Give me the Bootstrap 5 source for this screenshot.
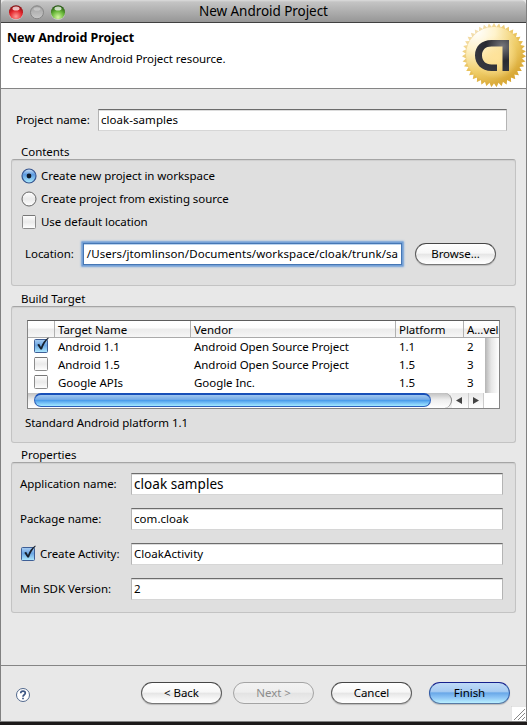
<!DOCTYPE html>
<html lang="en">
<head>
<meta charset="utf-8">
<meta name="viewport" content="width=device-width, initial-scale=1">
<title>New Android Project</title>
<link href="https://cdn.jsdelivr.net/npm/bootstrap@5.3.0/dist/css/bootstrap.min.css" rel="stylesheet">
<style>
body{width:527px;height:725px;overflow:hidden;background:#1d1a1a;font:12px/16px "Noto Sans","Open Sans",sans-serif;font-size:11.5px;color:#000;letter-spacing:-.05px}
.window{width:527px;height:722px;background:#e8e8e8;border:solid #808080;border-width:0 1px 1px 1px}
.titlebar{height:23px;background:linear-gradient(#dcdcdc 0,#c4c4c4 2px,#969696 22px);border-bottom:1px solid #404040;border-radius:5px 5px 0 0;padding-left:8px;font-size:13.5px}
.titlebar svg{width:56px;height:18px;margin-top:2px}
.titletext{margin-left:134px;white-space:nowrap;line-height:22px}
.banner{height:66px;background:#fff;border-bottom:1px solid #858585;padding:6px 0 0 6px}
.headline{font-size:12.5px;font-weight:700;line-height:17px}
.subline{padding:5px 0 0 5px}
.seal{width:64px;height:64px;margin-top:-6px}
.projectrow{height:22px;margin:20px 19px 0 15px}
.projectlabel{width:82px}
.field{height:22px;border:1px solid #b4b4b4;border-top-color:#6c6c6c;border-bottom-color:#d6d6d6;border-radius:0;background:#fff;padding:1px 2px;font-size:inherit;line-height:17px;color:#000;box-shadow:inset 0 1px 0 #dcdcdc;white-space:nowrap;overflow:hidden;letter-spacing:.05px}
.field.large{font-size:13.5px;line-height:19px}
.grouptitle{height:16px;padding-left:20px}
.contentstitle{margin-top:13px}
.targettitle{margin-top:5px}
.proptitle{margin-top:4px}
.groupbox{margin:-1px 10px 0 10px;background:#dfdfdf;border:1px solid #c3c3c3;border-top-color:#a5a5a5;border-radius:3px;box-shadow:inset 0 1px 1px #cfcfcf}
.contentsbox{height:127px;padding-top:4px}
.choice{height:23px;padding-left:9px;gap:4px}
.choice svg,.gridrow svg,.proprow svg{flex:none;overflow:visible}
.location{height:26px;margin:8px 19px 0 13px}
.focusfield{width:319px;height:22px;margin-left:9px;border:1px solid #4677b4;box-shadow:0 0 0 1.5px #74a0d6,0 0 2px 2px #8cb2de,inset 0 1px #bcd4ee;padding-left:3px;letter-spacing:.08px}
.aqua{width:81px;height:22px;padding:0 0 1px;font-size:inherit;line-height:17px;letter-spacing:inherit;color:#000!important;border:1.5px solid #555;border-color:#464646 #5c5c5c #777;border-radius:11px;background:linear-gradient(#fff 0,#f7f7f7 45%,#e6e6e6 52%,#f8f8f8 80%,#fff);box-shadow:0 1px 1px #bbb}
.aqua:disabled{color:#8c8c8c!important;border-color:#a4a4a4;background:linear-gradient(#f2f2f2 0,#eee 45%,#e3e3e3 52%,#f0f0f0);opacity:1;box-shadow:none}
.aqua.primary{border-color:#16208c #315ba5 #587aa4;background:linear-gradient(#bfdaf6 0,#a6cbf2 42%,#69a8e8 50%,#8cc4f5 72%,#baf0ff)}
.targetbox{height:137px}
.targets{width:473px;height:89px;margin:13px 0 0 15px;border:1px solid #858585;border-top:1px solid #5c5c5c;background:#fff}
.gridhead,.gridrow{display:grid;grid-template-columns:27px 136px 205px 68px 1fr}
.gridhead{height:17px;border-bottom:1px solid #aaa;background:linear-gradient(#fff 0,#fcfcfc 44%,#ebebeb 50%,#f6f6f6);line-height:17px}
.gridhead>div{border-right:1px solid #b1b1b1;padding-left:3px;white-space:nowrap;overflow:hidden}
.gridhead>div:last-child{border:0}
.gridrow{height:18px;line-height:17px;width:457px}
.gridrow>div{padding-left:3px;white-space:nowrap}
.gridrow>div:first-child{padding-left:6px;line-height:0}
.vtrack{width:14px;height:55px;background:linear-gradient(90deg,#b4b4b4,#e7e7e7 45%,#fff)}
.hscroll{width:456px;height:15px;background:#f0f0f0}
.htrack{width:424px;height:15px;background:linear-gradient(#c0c0c0,#eee 45%,#fff);border-radius:0 8px 8px 0;border-right:1px solid #888;padding-left:6px}
.thumb{width:397px;height:14px;border-radius:7px;border:1px solid #2b5fba;border-top:2px solid #174fb8;background:linear-gradient(#9fc6ee 0,#76ace7 40%,#479ae9 48%,#7cc5f8 75%,#a0eaff)}
.arrows{width:32px;height:15px;background:linear-gradient(#e8e8e8,#fff)}
.targetnote{padding:6px 0 0 13px}
.propbox{height:151px;padding-top:10px}
.proprow{height:22px;margin-bottom:13px;padding:0 12px 0 8px}
.proplabel{width:111px;gap:4px;white-space:nowrap}
.footerbar{height:55px;border-top:1px solid #858585;margin-top:52px;padding-left:14px}
.footerbar .aqua{position:static;margin-bottom:1px}
.help{margin-top:3px;margin-right:110px}
.gapnext{margin-left:11px}
.gapwide{margin-left:17px}
.grip{right:0;bottom:0;width:15px;height:15px;background:#fff}
</style>
</head>
<body>
<svg width="0" height="0" class="position-absolute">
<defs>
<linearGradient id="bluebox" x2="0" y2="1"><stop stop-color="#a9cdf2"/><stop offset=".45" stop-color="#6ba6e3"/><stop offset="1" stop-color="#b0ebff"/></linearGradient>
<linearGradient id="plainbox" x2="0" y2="1"><stop stop-color="#fff"/><stop offset=".5" stop-color="#eaeaea"/><stop offset="1" stop-color="#fff"/></linearGradient>
<linearGradient id="blueball" x2="0" y2="1"><stop stop-color="#cfe3f8"/><stop offset=".4" stop-color="#5c9ae0"/><stop offset="1" stop-color="#b0f0ff"/></linearGradient>
<symbol id="checked" viewBox="0 0 16 16" overflow="visible"><rect x=".5" y="1.5" width="13" height="13" rx="1" fill="url(#bluebox)" stroke="#3f5f96"/><path d="M3.300 6.700 5.100 5.800 7 8.900C8.600 5 10.600 2 14.200-.4L14.700.3C11.400 3.700 9.500 7 8 11.600H6.400Z" fill="#16202e"/></symbol>
<symbol id="unchecked" viewBox="0 0 16 16"><rect x=".5" y="1.5" width="13" height="13" rx="1" fill="url(#plainbox)" stroke="#8d8d8d"/><path d="M1 1.500h12" stroke="#777"/></symbol>
</defs>
</svg>
<main class="window d-flex flex-column position-relative">
<header class="titlebar d-flex align-items-center flex-shrink-0">
<svg viewBox="0 0 56 18" overflow="visible"><defs>
<radialGradient id="redball" cy=".8" r=".8"><stop stop-color="#ff9d98"/><stop offset=".55" stop-color="#e3262c"/><stop offset="1" stop-color="#7b0d10"/></radialGradient>
<radialGradient id="greenball" cy=".85" r=".8"><stop stop-color="#d5f7a0"/><stop offset=".55" stop-color="#68b639"/><stop offset="1" stop-color="#245611"/></radialGradient>
<linearGradient id="greyball" x2="0" y2="1"><stop stop-color="#a0a0a0"/><stop offset="1" stop-color="#c9c9c9"/></linearGradient></defs>
<circle cx="7" cy="10" r="7.100" fill="#ccc"/><circle cx="7" cy="9.300" r="7" fill="url(#redball)"/><ellipse cx="7" cy="5.500" rx="3.500" ry="2.100" fill="#fff" opacity=".72"/>
<circle cx="28" cy="9.300" r="6.500" fill="url(#greyball)" stroke="#858585"/><ellipse cx="28" cy="6" rx="3.500" ry="1.800" fill="#ddd" opacity=".5"/>
<circle cx="49" cy="10" r="7.100" fill="#ccc"/><circle cx="49" cy="9.300" r="7" fill="url(#greenball)"/><ellipse cx="49" cy="5.500" rx="3.500" ry="2.100" fill="#fff" opacity=".72"/></svg>
<span class="titletext">New Android Project</span>
</header>
<section class="banner d-flex justify-content-between flex-shrink-0">
<div><div class="headline">New Android Project</div><div class="subline">Creates a new Android Project resource.</div></div>
<svg class="seal" viewBox="0 0 64 64"><defs><radialGradient id="gold" cx=".22" cy=".12" r="1"><stop stop-color="#fff"/><stop offset=".3" stop-color="#fff3cc"/><stop offset=".65" stop-color="#efcd68"/><stop offset="1" stop-color="#d09a22"/></radialGradient><radialGradient id="glow"><stop stop-color="#ffe39a"/><stop offset="1" stop-color="#ffe7a8" stop-opacity="0"/></radialGradient><radialGradient id="ink" cx=".8" cy=".2" r=".8"><stop stop-color="#77777c"/><stop offset=".6" stop-color="#292a31"/><stop offset="1" stop-color="#34363e"/></radialGradient>
<path id="spike" d="M32 0 59.700 48H4.300Z"/>
<clipPath id="teeth"><use href="#spike"/><use href="#spike" transform="rotate(9.231 32 32)"/><use href="#spike" transform="rotate(18.462 32 32)"/><use href="#spike" transform="rotate(27.692 32 32)"/><use href="#spike" transform="rotate(36.923 32 32)"/><use href="#spike" transform="rotate(46.154 32 32)"/><use href="#spike" transform="rotate(55.385 32 32)"/><use href="#spike" transform="rotate(64.615 32 32)"/><use href="#spike" transform="rotate(73.846 32 32)"/><use href="#spike" transform="rotate(83.077 32 32)"/><use href="#spike" transform="rotate(92.308 32 32)"/><use href="#spike" transform="rotate(101.538 32 32)"/><use href="#spike" transform="rotate(110.769 32 32)"/></clipPath></defs>
<g clip-path="url(#teeth)"><rect width="64" height="64" fill="url(#gold)"/><circle cx="32" cy="32" r="30.500" fill="none" stroke="#dfae40" stroke-width="5" opacity=".4"/></g>
<circle cx="34" cy="34" r="22" fill="url(#glow)"/>
<path d="M47 17H29.500C19.500 17 13 23.500 13 32.300S19.500 48 29.500 48H35v-6.500h-5.500c-6 0-9.500-3.800-9.500-9.200s3.500-8.800 9.500-8.800h11V48H47Z" fill="url(#ink)"/></svg>
</section>
<section class="projectrow d-flex flex-shrink-0 align-items-center"><div class="projectlabel flex-shrink-0 text-nowrap">Project name:</div><div class="field form-control">cloak-samples</div></section>
<div class="grouptitle contentstitle flex-shrink-0">Contents</div>
<section class="groupbox contentsbox flex-shrink-0">
<div class="choice d-flex align-items-center"><svg width="16" height="16" viewBox="0 0 16 16"><circle cx="8" cy="8" r="7" fill="url(#blueball)" stroke="#34538e" stroke-width="1.200"/><circle cx="8" cy="8" r="2.400" fill="#101827"/></svg><span>Create new project in workspace</span></div>
<div class="choice d-flex align-items-center"><svg width="16" height="16" viewBox="0 0 16 16"><circle cx="8" cy="8" r="7" fill="url(#plainbox)" stroke="#666"/></svg><span>Create project from existing source</span></div>
<div class="choice d-flex align-items-center"><svg width="16" height="16" viewBox="-1 0 16 16"><use href="#unchecked" width="16" height="16"/></svg><span>Use default location</span></div>
<div class="location d-flex align-items-center"><span>Location:</span><div class="field focusfield">/Users/jtomlinson/Documents/workspace/cloak/trunk/sa</div><button class="btn aqua ms-auto">Browse...</button></div>
</section>
<div class="grouptitle targettitle flex-shrink-0">Build Target</div>
<section class="groupbox targetbox flex-shrink-0">
<div class="targets">
<div class="gridhead"><div></div><div>Target Name</div><div>Vendor</div><div>Platform</div><div>A...vel</div></div>
<div class="d-flex">
<div>
<div class="gridrow"><div><svg width="16" height="16"><use href="#checked" width="16" height="16"/></svg></div><div>Android 1.1</div><div>Android Open Source Project</div><div>1.1</div><div>2</div></div>
<div class="gridrow"><div><svg width="16" height="16"><use href="#unchecked" width="16" height="16"/></svg></div><div>Android 1.5</div><div>Android Open Source Project</div><div>1.5</div><div>3</div></div>
<div class="gridrow"><div><svg width="16" height="16"><use href="#unchecked" width="16" height="16"/></svg></div><div>Google APIs</div><div>Google Inc.</div><div>1.5</div><div>3</div></div>
</div>
<div class="vtrack"></div></div>
<div class="hscroll d-flex"><div class="htrack"><div class="thumb"></div></div><svg class="arrows" viewBox="0 0 32 15"><path d="M10 4v7L4 7.500ZM21 4v7l6-3.500Z" fill="#444"/><path d="M16.500 0v15M31.500 0v15" stroke="#ccc"/></svg></div>
</div>
<div class="targetnote">Standard Android platform 1.1</div>
</section>
<div class="grouptitle proptitle flex-shrink-0">Properties</div>
<section class="groupbox propbox flex-shrink-0">
<div class="proprow d-flex align-items-center"><div class="proplabel flex-shrink-0">Application name:</div><div class="field large form-control">cloak samples</div></div>
<div class="proprow d-flex align-items-center"><div class="proplabel flex-shrink-0">Package name:</div><div class="field form-control">com.cloak</div></div>
<div class="proprow d-flex align-items-center"><div class="proplabel d-flex align-items-center flex-shrink-0"><svg width="16" height="16" viewBox="-1 0 16 16"><use href="#checked" width="16" height="16"/></svg>Create Activity:</div><div class="field form-control">CloakActivity</div></div>
<div class="proprow d-flex align-items-center"><div class="proplabel flex-shrink-0">Min SDK Version:</div><div class="field form-control">2</div></div>
</section>
<footer class="footerbar d-flex flex-shrink-0 align-items-center">
<svg class="help" width="16" height="16" viewBox="0 0 16 16"><circle cx="8" cy="8" r="6.500" fill="#fff" stroke="#52698d"/><path d="M5.700 6.300C5.700 3.300 10.300 3.500 10.300 6.100 10.300 7.800 8 7.700 8 9.700M8 10.700v1.600" fill="none" stroke="#3e5784" stroke-width="1.700"/></svg>
<button class="btn aqua">&lt; Back</button><button class="btn aqua gapnext" disabled>Next &gt;</button><button class="btn aqua gapwide">Cancel</button><button class="btn aqua primary gapwide">Finish</button>
</footer>
<svg class="grip position-absolute" viewBox="0 0 15 15"><path d="M0 15V0h15" fill="none" stroke="#ccc"/><path d="m3 14L14 3M7 14l7-7M11 14l3-3" stroke="#888"/></svg>
</main>
<script src="https://cdn.jsdelivr.net/npm/bootstrap@5.3.0/dist/js/bootstrap.bundle.min.js"></script>
</body>
</html>
